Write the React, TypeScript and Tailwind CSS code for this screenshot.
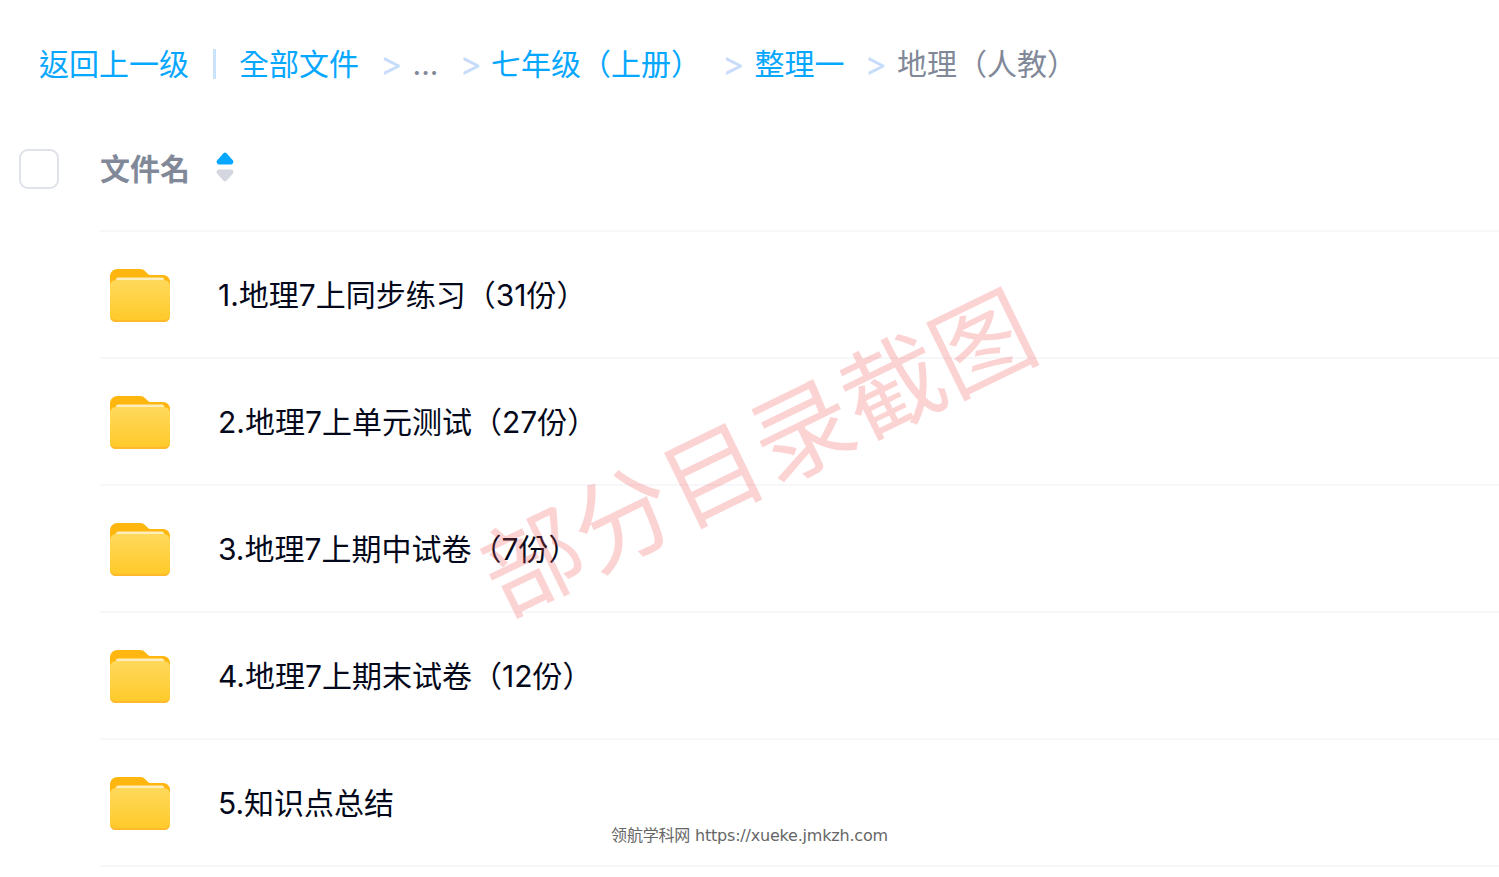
const cjk = "font-['Inter','Noto_Sans_CJK_TC',sans-serif]"

const files = [
  '1.地理7上同步练习（31份）',
  '2.地理7上单元测试（27份）',
  '3.地理7上期中试卷（7份）',
  '4.地理7上期末试卷（12份）',
  '5.知识点总结',
]

function FolderIcon() {
  return (
    <svg width="60" height="54" viewBox="0 0 60 54" className="shrink-0">
      <defs>
        <linearGradient id="folderBody" x1="0" y1="0" x2="0" y2="1">
          <stop offset="0" stopColor="#ffd95c" />
          <stop offset="1" stopColor="#ffc928" />
        </linearGradient>
      </defs>
      <path d="M8 0h22c3 0 4 1 6 3l2 2c1 1 2 1 4 1h11c4 0 7 3 7 7v10H0V8c0-5 3-8 8-8z" fill="#ffb70f" />
      <rect x="6" y="8.500" width="48" height="8" rx="2" fill="#ffeebb" />
      <rect x="0" y="11" width="60" height="42" rx="6" fill="url(#folderBody)" />
      <path d="M0 47c0 4 3 6 6 6h48c3 0 6-2 6-6 0 2-3 4-6 4H6c-3 0-6-2-6-4z" fill="#ffb92a" />
    </svg>
  )
}

function Sep() {
  return <span className="text-[34px] leading-none text-[#c6dcfa] font-['Inter',sans-serif]">&gt;</span>
}

export default function App() {
  return (
    <div className={`relative h-[877px] w-full overflow-hidden bg-white ${cjk}`}>
      <div className="flex h-[128px] items-center pl-[39px] text-[30px] leading-none text-[#06a7ff]">
        <span>返回上一级</span>
        <span className="ml-[24px] h-[30px] w-[3px] bg-[#cbe2fb]" />
        <span className="ml-[23px]">全部文件</span>
        <span className="ml-[21px]"><Sep /></span>
        <span className="ml-[10px] text-[#818999]">...</span>
        <span className="ml-[21px]"><Sep /></span>
        <span className="ml-[9px]">七年级（上册）</span>
        <span className="ml-[21px]"><Sep /></span>
        <span className="ml-[10px]">整理一</span>
        <span className="ml-[20px]"><Sep /></span>
        <span className="ml-[10px] text-[#818999]">地理（人教）</span>
      </div>

      <div className="flex h-[103px] items-start pl-[19px] pt-[21px]">
        <span className="h-[40px] w-[40px] rounded-[9px] border-2 border-[#dfe2ea] bg-white" />
        <span className="ml-[41px] text-[30px] leading-[40px] font-bold text-[#818999]">文件名</span>
        <svg width="18" height="30" viewBox="0 0 18 30" className="ml-[26px] mt-[3px]">
          <path d="M7.500 1.200a2.200 2.200 0 0 1 3 0l6.500 7.300c1 1.500 0 4-2 4H3c-2 0-3-2.500-2-4z" fill="#06a7ff" />
          <path d="M7.500 28.800a2.200 2.200 0 0 0 3 0l6.500-7.300c1-1.500 0-4-2-4H3c-2 0-3 2.500-2 4z" fill="#d4d7e0" />
        </svg>
      </div>

      <div className="ml-[100px] -mt-px border-t-2 border-[#f7f7f9]">
        {files.map((name) => (
          <div key={name} className="flex h-[127px] items-center border-b-2 border-[#f7f7f9] pl-[10px] pt-[2px]">
            <FolderIcon />
            <span className="mb-[2px] ml-[48px] text-[30px] leading-none text-[#03081a]">{name}</span>
          </div>
        ))}
      </div>

      <div className="absolute left-0 right-0 top-[825px] text-center text-[16px] leading-[21px] tracking-[-0.2px] text-[#666666] font-['DejaVu_Sans','Noto_Sans_CJK_SC',sans-serif]">
        领航学科网 https://xueke.jmkzh.com
      </div>

      <div className="pointer-events-none absolute left-[455px] top-[382px] w-[600px] -rotate-[26deg] whitespace-nowrap text-center text-[100px] leading-[130px] text-[#f44e4e]/25 font-['Noto_Sans_CJK_SC',sans-serif]">
        部分目录截图
      </div>
    </div>
  )
}
